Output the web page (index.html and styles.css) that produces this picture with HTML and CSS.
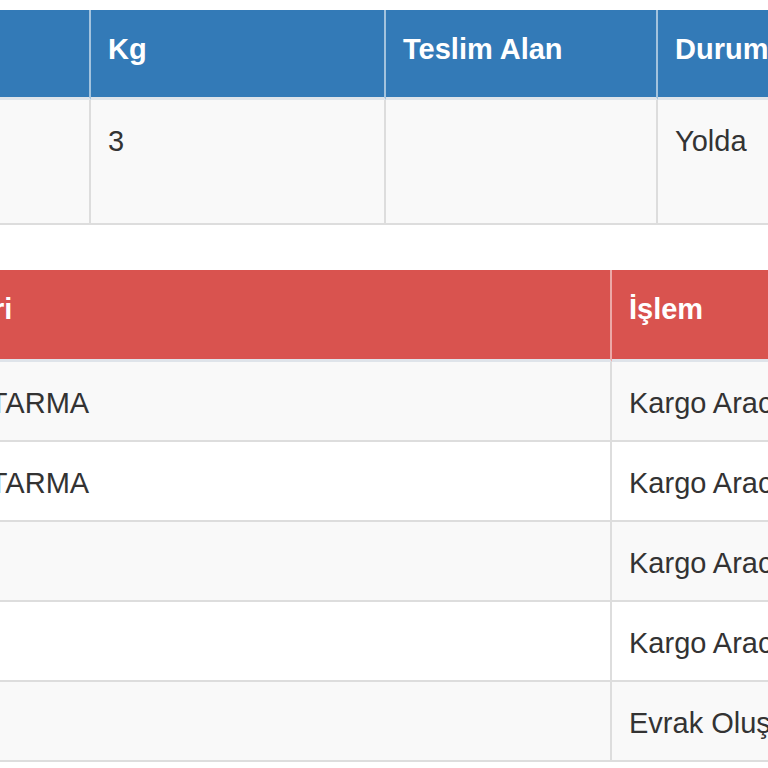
FILE: index.html
```html
<!DOCTYPE html>
<html lang="tr">
<head>
<meta charset="utf-8">
<title>Kargo Takip</title>
<link rel="stylesheet" href="styles.css">
</head>
<body>
<div class="viewport">
  <table class="grid grid-top">
    <colgroup>
      <col class="c-a"><col class="c-b"><col class="c-c"><col class="c-d">
    </colgroup>
    <thead>
      <tr class="head-blue">
        <th>Alıcı</th>
        <th>Kg</th>
        <th>Teslim Alan</th>
        <th>Durum</th>
      </tr>
    </thead>
    <tbody>
      <tr class="row-tall">
        <td>&nbsp;</td>
        <td>3</td>
        <td></td>
        <td>Yolda</td>
      </tr>
    </tbody>
  </table>

  <table class="grid grid-bottom">
    <colgroup>
      <col class="c-e"><col class="c-f">
    </colgroup>
    <thead>
      <tr class="head-red">
        <th class="first">Şube Bilgileri</th>
        <th>İşlem</th>
      </tr>
    </thead>
    <tbody>
      <tr><td class="first">ANKARA AKTARMA</td><td>Kargo Aracına Yüklendi</td></tr>
      <tr><td class="first">ANKARA AKTARMA</td><td>Kargo Aracından İndirildi</td></tr>
      <tr><td class="first">ANKARA</td><td>Kargo Aracına Yüklendi</td></tr>
      <tr><td class="first">ANKARA</td><td>Kargo Aracına Yüklendi</td></tr>
      <tr><td class="first">ANKARA</td><td>Evrak Oluşturuldu</td></tr>
    </tbody>
  </table>
</div>
</body>
</html>
```

FILE: styles.css
```css
html, body {
  margin: 0;
  padding: 0;
  background: #ffffff;
}

.viewport {
  width: 768px;
  height: 768px;
  overflow: hidden;
  padding-top: 10px;
  box-sizing: border-box;
  font-family: "Liberation Sans", Arial, sans-serif;
  font-size: 29px;
  line-height: 41px;
  color: #333333;
}

.grid {
  border-collapse: separate;
  border-spacing: 0;
  table-layout: fixed;
}

.grid th,
.grid td {
  text-align: left;
  white-space: nowrap;
  overflow: hidden;
  box-sizing: border-box;
}

.grid th {
  font-weight: bold;
  color: #ffffff;
  padding: 19px 17px 27px;
  border-bottom: 3px solid #dfe4ea;
  border-right: 2px solid rgba(255, 255, 255, 0.55);
  vertical-align: top;
}

.grid td {
  padding: 21px 17px 16px;
  border-bottom: 2px solid #dddddd;
  border-right: 2px solid #dddddd;
  vertical-align: top;
}

.grid-top {
  margin-left: -100px;
  width: 959px;
}

.c-a { width: 191px; }
.c-b { width: 295px; }
.c-c { width: 272px; }
.c-d { width: 201px; }

.head-blue th {
  background: #337ab7;
}

.row-tall td {
  background: #f9f9f9;
  padding-bottom: 61px;
}

.grid-bottom {
  margin-top: 45px;
  margin-left: -196px;
  width: 1109px;
}

.c-e { width: 808px; }
.c-f { width: 301px; }

.grid-bottom .first {
  padding-left: 23px;
}

.head-red th {
  background: #d9534f;
  border-right-color: rgba(255, 255, 255, 0.5);
  padding-bottom: 29px;
}

.grid-bottom tbody tr:nth-child(odd) td {
  background: #f9f9f9;
}

.grid-bottom tbody tr:nth-child(even) td {
  background: #ffffff;
}
```
